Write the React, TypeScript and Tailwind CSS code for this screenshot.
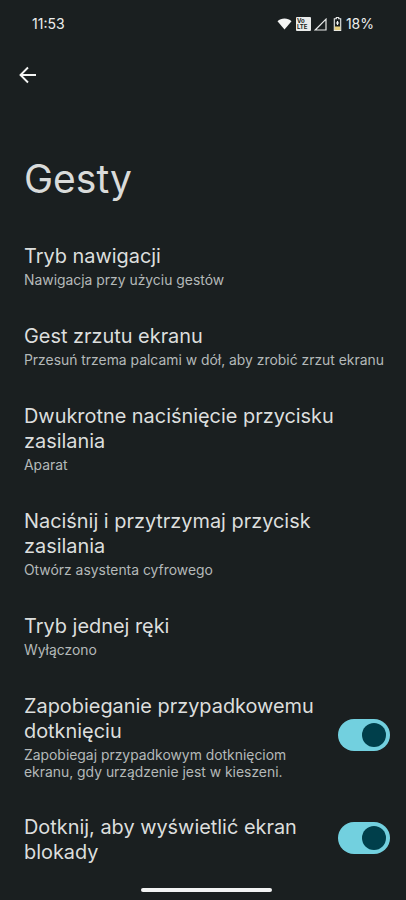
const rows: { t: string[]; s?: string[]; toggle?: boolean; mt: string }[] = [
  { t: ["Tryb nawigacji"], s: ["Nawigacja przy użyciu gestów"], mt: "mt-[39px]" },
  { t: ["Gest zrzutu ekranu"], s: ["Przesuń trzema palcami w dół, aby zrobić zrzut ekranu"], mt: "mt-[35px]" },
  { t: ["Dwukrotne naciśnięcie przycisku", "zasilania"], s: ["Aparat"], mt: "mt-[35px]" },
  { t: ["Naciśnij i przytrzymaj przycisk", "zasilania"], s: ["Otwórz asystenta cyfrowego"], mt: "mt-[35px]" },
  { t: ["Tryb jednej ręki"], s: ["Wyłączono"], mt: "mt-[35px]" },
  { t: ["Zapobieganie przypadkowemu", "dotknięciu"], s: ["Zapobiegaj przypadkowym dotknięciom", "ekranu, gdy urządzenie jest w kieszeni."], toggle: true, mt: "mt-[35px]" },
  { t: ["Dotknij, aby wyświetlić ekran", "blokady"], toggle: true, mt: "mt-[34px]" },
];

function Toggle() {
  return (
    <div className="w-[52px] h-[32px] mb-[5px] rounded-full bg-[#72d0df] flex items-center justify-end pr-[4px] shrink-0">
      <div className="w-[24px] h-[24px] rounded-full bg-[#003f4b]" />
    </div>
  );
}

function StatusIcons() {
  return (
    <div className="flex items-center">
      <svg width="15" height="12" viewBox="0 0 14 12" className="mr-[4px]">
        <path d="M0 3.2C1.8 1.3 4.3 0.4 7 0.4s5.2 0.9 7 2.8L7 11.6z" fill="#f4f5f4" />
      </svg>
      <div className="w-[15px] h-[14px] bg-[#e9ebea] rounded-[1px] flex flex-col justify-center text-[#1a1f20] text-[6px] leading-[6px] font-bold mr-[3px]">
        <span className="pl-[1px]">Vo</span>
        <span className="pl-[1px]">LTE</span>
      </div>
      <svg width="13" height="13" viewBox="0 0 13 13" className="mr-[6px]">
        <path d="M12 1.2L1.2 12H12z" fill="none" stroke="#e9ebea" strokeWidth="1.2" />
      </svg>
      <svg width="9" height="14" viewBox="0 0 8 14" className="mr-[4px]">
        <path d="M2.8 0.5h2.4v1.2h2v11.8H0.8V1.7h2z" fill="none" stroke="#e9ebea" strokeWidth="1.1" />
        <rect x="1.2" y="9.5" width="5.6" height="3.6" fill="#e6cf7c" />
        <path d="M4 4v4M2.4 6h3.2" stroke="#f4f5f4" strokeWidth="1.2" />
      </svg>
      <span className="text-[14px] leading-[18px] text-[#eceeed]">18%</span>
    </div>
  );
}

export default function App() {
  return (
    <div className="w-[406px] h-[900px] overflow-hidden relative bg-[#1a1f20] text-[#e3e5e4] font-['Inter',sans-serif]">
      <div className="h-[48px] pl-[32px] pr-[32px] flex items-center justify-between">
        <span className="text-[14px] leading-[18px] text-[#eceeed]">11:53</span>
        <StatusIcons />
      </div>
      <div className="pl-[17px] pt-[16px] h-[70px]">
        <svg width="22" height="22" viewBox="0 0 22 22" fill="none" stroke="#f4f5f4" strokeWidth="1.9">
          <path d="M19 11H3.5M11 3.5L3.5 11l7.5 7.5" />
        </svg>
      </div>
      <h1 className="pl-[24px] mt-[35px] text-[39px] leading-[52px] font-normal text-[#d9dbda]">Gesty</h1>
      <div className="pl-[24px] pr-[16px]">
        {rows.map((r) => (
          <div key={r.t[0]} className={`${r.mt} flex items-center justify-between`}>
            <div className="min-w-0">
              {r.t.map((l) => (
                <div key={l} className="text-[19.9px] leading-[25px] whitespace-nowrap text-[#dcdedd]">{l}</div>
              ))}
              {r.s && (
                <div className="mt-[3px]">
                  {r.s.map((l) => (
                    <div key={l} className="text-[13.9px] leading-[17px] whitespace-nowrap text-[#b4b9b9]">{l}</div>
                  ))}
                </div>
              )}
            </div>
            {r.toggle && <Toggle />}
          </div>
        ))}
      </div>
      <div className="absolute left-[141px] bottom-[8px] w-[131px] h-[4px] rounded-full bg-[#f2f3f3]" />
    </div>
  );
}
